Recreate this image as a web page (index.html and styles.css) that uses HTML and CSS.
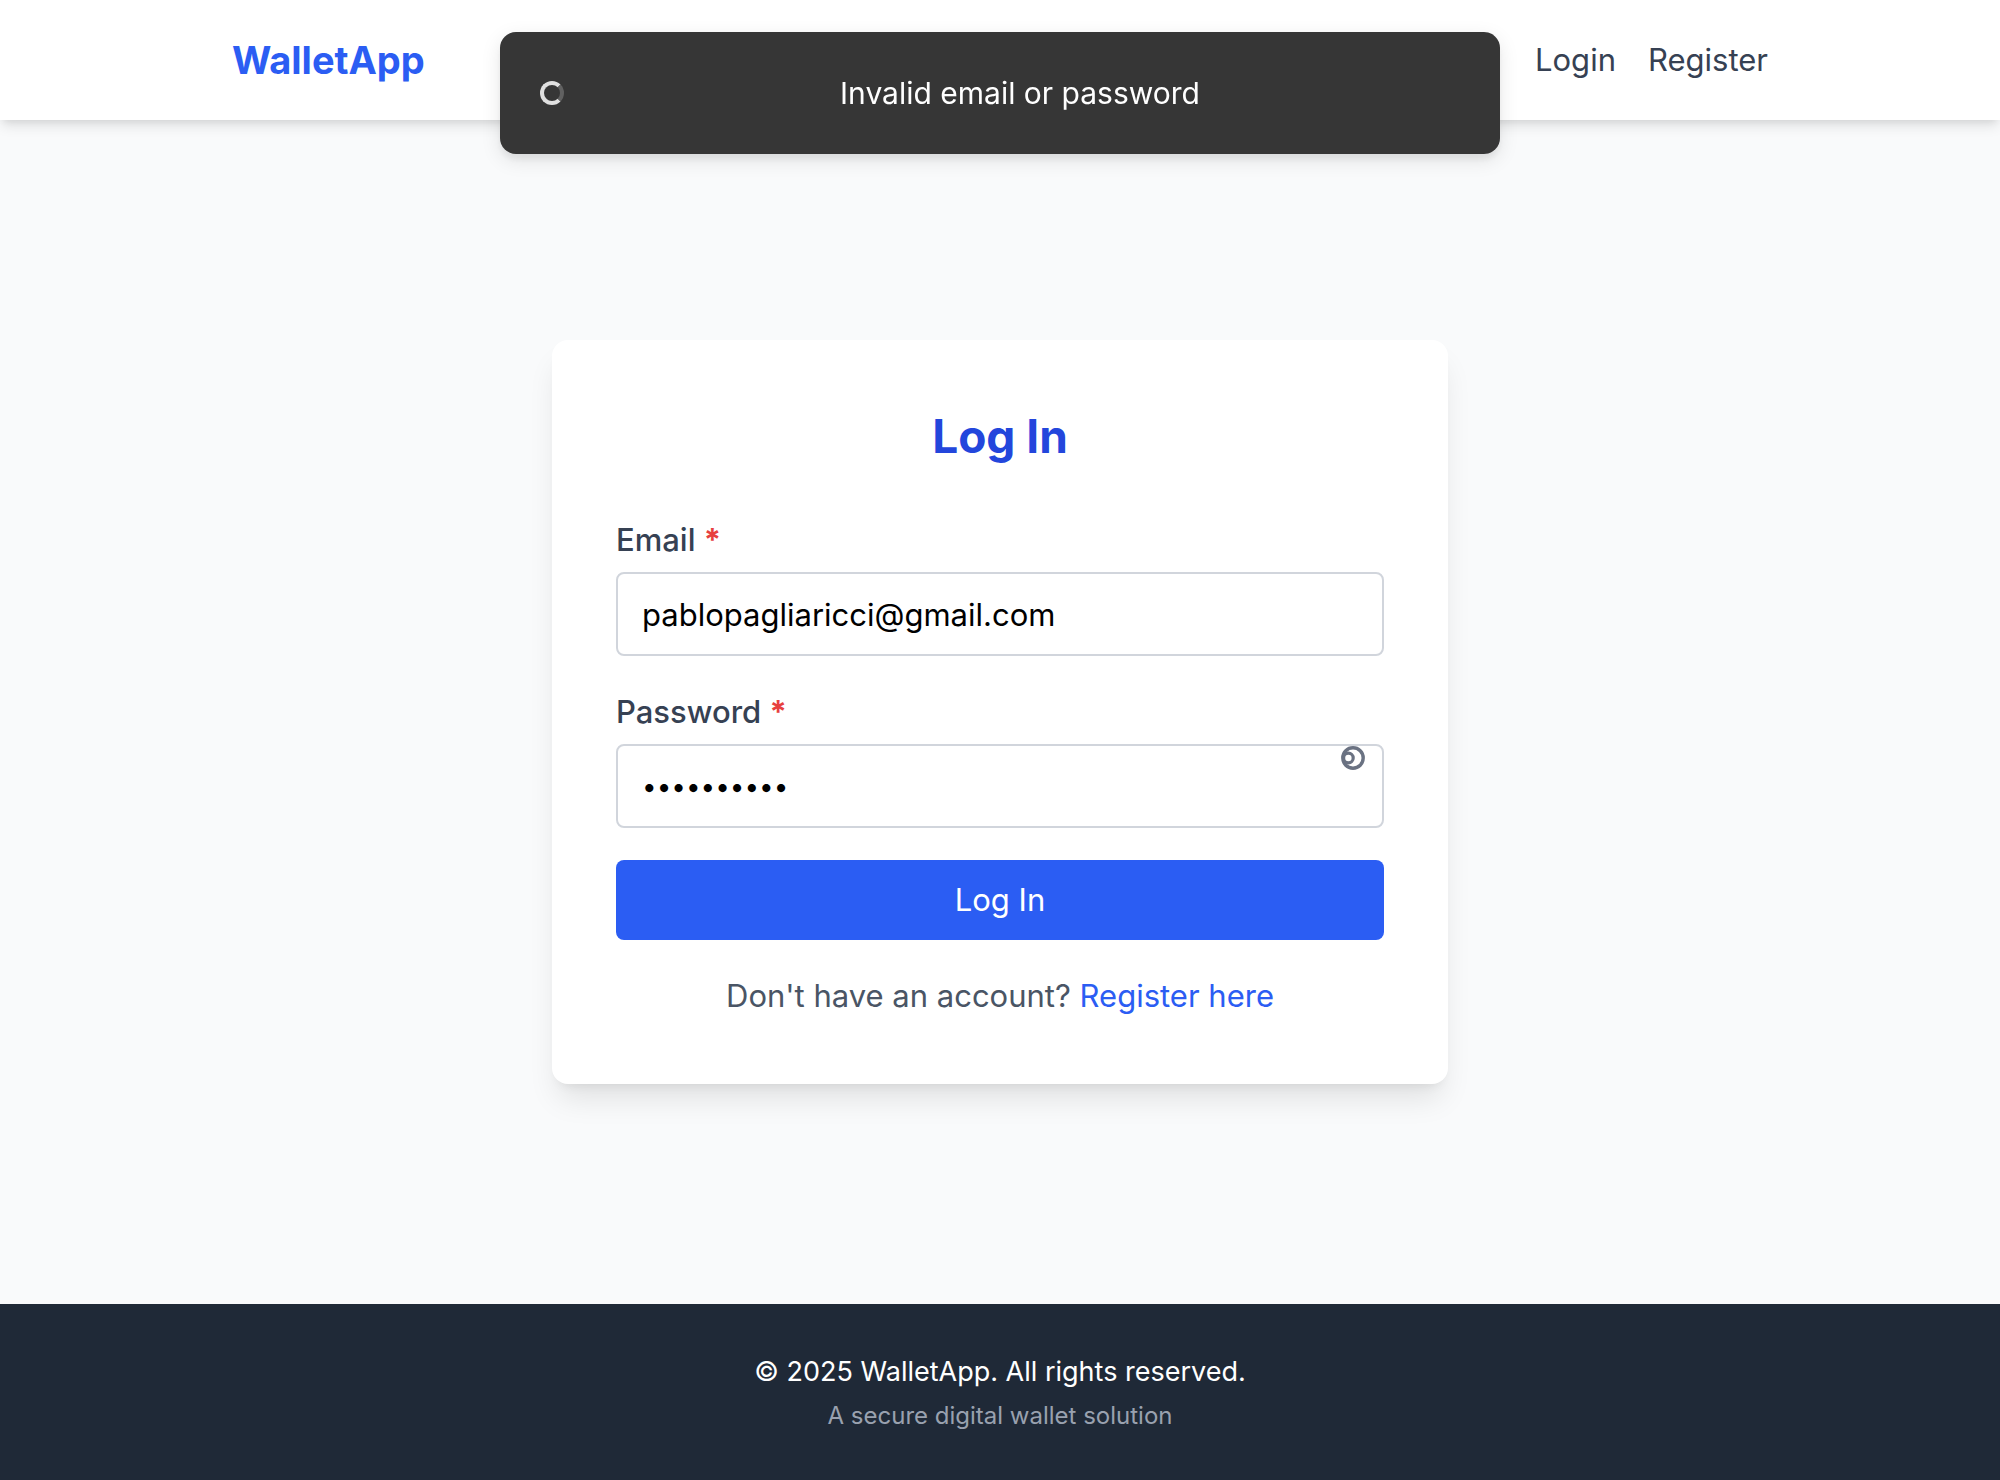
FILE: index.html
```html
<!DOCTYPE html>
<html lang="en">
<head>
  <meta charset="utf-8">
  <meta name="viewport" content="width=device-width, initial-scale=1">
  <title>WalletApp</title>
  <link rel="stylesheet" href="styles.css">
</head>
<body>
  <header class="site-header">
    <div class="container">
      <a class="brand" href="#">WalletApp</a>
      <nav class="nav">
        <a href="#login">Login</a>
        <a href="#register">Register</a>
      </nav>
    </div>
  </header>

  <main class="main">
    <section class="card">
      <h1 class="card-title">Log In</h1>
      <form class="form">
        <div class="field">
          <label for="email">Email <span class="required">*</span></label>
          <input id="email" type="email" value="pablopagliaricci@gmail.com" required>
        </div>
        <div class="field">
          <label for="password">Password <span class="required">*</span></label>
          <div class="input-wrap">
            <input id="password" type="password" value="walletpass" required>
            <svg class="key-icon" viewBox="0 0 24 24" fill="none" stroke="currentColor" aria-hidden="true">
              <circle cx="12" cy="12" r="10.2" stroke-width="3.4"/>
              <circle cx="7.4" cy="12" r="4.8" stroke-width="3.2"/>
            </svg>
          </div>
        </div>
        <button class="submit" type="submit">Log In</button>
      </form>
      <p class="signup">Don't have an account? <a href="#register">Register here</a></p>
    </section>
  </main>

  <footer class="site-footer">
    <p class="copyright">© 2025 WalletApp. All rights reserved.</p>
    <p class="tagline">A secure digital wallet solution</p>
  </footer>

  <div class="toast" role="status">
    <span class="spinner"></span>
    <p class="toast-message">Invalid email or password</p>
  </div>
</body>
</html>
```

FILE: styles.css
```css
* {
  box-sizing: border-box;
  margin: 0;
}

body {
  display: flex;
  flex-direction: column;
  min-height: 100vh;
  background: #f9fafb;
  color: #364153;
  font-family: Inter, "Liberation Sans", sans-serif;
  font-size: 31px;
  line-height: 48px;
}

a {
  color: inherit;
  text-decoration: none;
}

.site-header {
  padding: 32px 0;
  background: #fff;
  box-shadow: 0 8px 12px -2px rgba(0, 0, 0, 0.1), 0 4px 8px -4px rgba(0, 0, 0, 0.1);
}

.container {
  display: flex;
  align-items: center;
  justify-content: space-between;
  width: 100%;
  max-width: 1536px;
  height: 56px;
  margin: 0 auto;
}

.brand {
  color: #2b5df3;
  font-size: 38px;
  font-weight: 700;
  line-height: 56px;
}

.nav {
  display: flex;
  gap: 32px;
}

.main {
  display: flex;
  flex: 1;
  align-items: center;
  justify-content: center;
}

.card {
  width: 100%;
  max-width: 896px;
  padding: 64px;
  border-radius: 16px;
  background: #fff;
  box-shadow: 0 20px 30px -6px rgba(0, 0, 0, 0.1), 0 8px 12px -8px rgba(0, 0, 0, 0.1);
}

.card-title {
  margin-bottom: 48px;
  color: #2346dc;
  font-size: 46px;
  font-weight: 700;
  line-height: 64px;
  text-align: center;
}

.form {
  display: flex;
  flex-direction: column;
  gap: 32px;
}

.field label {
  display: block;
  margin-bottom: 8px;
  font-weight: 500;
}

.required {
  color: #e7403e;
  font-weight: 700;
}

.field input {
  display: block;
  width: 100%;
  height: 84px;
  padding: 16px 24px;
  border: 2px solid #d1d5dc;
  border-radius: 8px;
  background: #fff;
  color: #000;
  font: inherit;
}

.field input[type="password"] {
  font-size: 26px;
}

.input-wrap {
  position: relative;
}

.key-icon {
  position: absolute;
  top: 2px;
  right: 19px;
  width: 24px;
  height: 24px;
  color: #6a7282;
}

.submit {
  height: 80px;
  border: 0;
  border-radius: 8px;
  background: #2b5df3;
  color: #fff;
  font: inherit;
}

.signup {
  margin-top: 32px;
  color: #4a5565;
  text-align: center;
}

.signup a {
  color: #2b5df3;
}

.site-footer {
  padding: 48px;
  background: #1f2937;
  text-align: center;
}

.copyright {
  color: #fff;
  font-size: 27px;
  line-height: 40px;
}

.tagline {
  margin-top: 8px;
  color: #99a1af;
  font-size: 24px;
  line-height: 32px;
}

.toast {
  position: fixed;
  top: 32px;
  left: 50%;
  display: flex;
  align-items: center;
  gap: 16px;
  width: 100%;
  max-width: 1000px;
  padding: 37px 40px;
  border-radius: 16px;
  background: #363636;
  color: #fff;
  box-shadow: 0 6px 20px rgba(0, 0, 0, 0.1), 0 6px 6px rgba(0, 0, 0, 0.05);
  transform: translateX(-50%);
}

.spinner {
  width: 24px;
  height: 24px;
  border: 4px solid #e0e0e0;
  border-right-color: #616161;
  border-radius: 50%;
}

.toast-message {
  flex: 1;
  font-size: 30px;
  text-align: center;
}
```
